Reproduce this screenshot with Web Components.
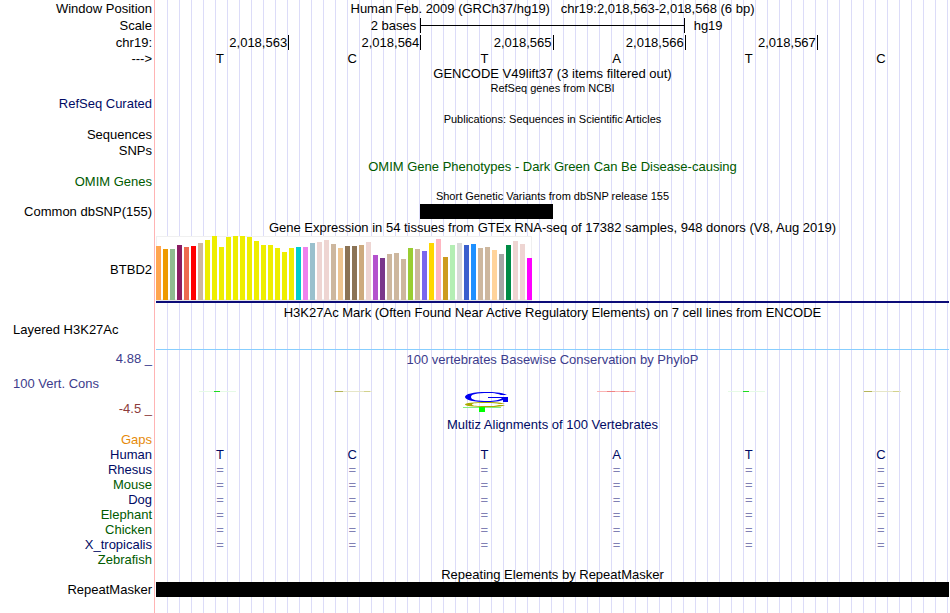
<!DOCTYPE html>
<html lang="en">
<head>
<meta charset="utf-8">
<title>Human chr19:2,018,563-2,018,568</title>
<style>
    body {
        margin: 0;
        background: #fff;
        color: #000;
        font: 13px/15px "Liberation Sans", Arial, sans-serif;
    }
</style>
</head>
<body>
<genome-browser>
    <track-row size="position" label="Window Position"><track-title>Human Feb. 2009 (GRCh37/hg19) &nbsp; chr19:2,018,563-2,018,568 (6 bp)</track-title></track-row>
    <track-row size="position" label="Scale"><scale-bar length="2 bases" assembly="hg19"></scale-bar></track-row>
    <track-row size="position" label="chr19:"><position-ruler start="2018563"></position-ruler></track-row>
    <track-row label="---&gt;"><base-row bases="TCTATC"></base-row></track-row>
    <track-row><track-title>GENCODE V49lift37 (3 items filtered out)</track-title></track-row>
    <track-row><track-title small>RefSeq genes from NCBI</track-title></track-row>
    <track-row label="RefSeq Curated" color="navy"></track-row>
    <track-row size="title"><track-title small>Publications: Sequences in Scientific Articles</track-title></track-row>
    <track-row label="Sequences"></track-row>
    <track-row size="title" label="SNPs"></track-row>
    <track-row size="title" color="green"><track-title>OMIM Gene Phenotypes - Dark Green Can Be Disease-causing</track-title></track-row>
    <track-row label="OMIM Genes" color="green"></track-row>
    <track-row><track-title small>Short Genetic Variants from dbSNP release 155</track-title></track-row>
    <track-row label="Common dbSNP(155)"><feature-bar from="2" to="3"></feature-bar></track-row>
    <track-row size="position"><track-title>Gene Expression in 54 tissues from GTEx RNA-seq of 17382 samples, 948 donors (V8, Aug 2019)</track-title></track-row>
    <track-row size="auto" label="BTBD2"><expression-chart></expression-chart></track-row>
    <track-row size="wide"><track-title>H3K27Ac Mark (Often Found Near Active Regulatory Elements) on 7 cell lines from ENCODE</track-title></track-row>
    <track-row size="signal" label="Layered H3K27Ac" side="left"></track-row>
    <track-row size="auto">
        <axis-labels slot="label" max="4.88 _" name="100 Vert. Cons" min="-4.5 _"></axis-labels>
        <conservation-plot></conservation-plot>
    </track-row>
    <track-row color="navy"><track-title>Multiz Alignments of 100 Vertebrates</track-title></track-row>
    <track-row label="Gaps" color="orange"></track-row>
    <track-row label="Human" color="navy"><base-row bases="TCTATC"></base-row></track-row>
    <track-row label="Rhesus" color="navy"><base-row bases="======"></base-row></track-row>
    <track-row label="Mouse" color="green"><base-row bases="======"></base-row></track-row>
    <track-row label="Dog" color="navy"><base-row bases="======"></base-row></track-row>
    <track-row label="Elephant" color="green"><base-row bases="======"></base-row></track-row>
    <track-row label="Chicken" color="green"><base-row bases="======"></base-row></track-row>
    <track-row label="X_tropicalis" color="navy"><base-row bases="======"></base-row></track-row>
    <track-row label="Zebrafish" color="green"></track-row>
    <track-row><track-title>Repeating Elements by RepeatMasker</track-title></track-row>
    <track-row label="RepeatMasker"><feature-bar from="0" to="6"></feature-bar></track-row>
</genome-browser>

<script>
class GenomeBrowser extends HTMLElement {
    constructor() {
        super();
        this.attachShadow({ mode: 'open' });
        this.shadowRoot.innerHTML = `
            <style>
                :host {
                    display: block;
                    box-sizing: border-box;
                    min-height: 100vh;
                    padding-right: 1px;
                    --label-width: 156px;
                    background:
                        linear-gradient(#ffb4b4, #ffb4b4) 154px 0 / 1px 100% no-repeat,
                        repeating-linear-gradient(to right, transparent 0 11px, #dcdcf8 11px 12px) 156px 0 no-repeat;
                }
            </style>
            <slot></slot>
        `;
    }
}

class TrackRow extends HTMLElement {
    constructor() {
        super();
        this.attachShadow({ mode: 'open' });
        this.shadowRoot.innerHTML = `
            <style>
                :host {
                    display: grid;
                    grid-template-columns: var(--label-width) minmax(0, 1fr);
                    min-height: 15px;
                }
                :host([size="title"]) { min-height: 16px; }
                :host([size="position"]) { min-height: 17px; }
                :host([size="wide"]) { min-height: 19px; }
                :host([size="signal"]) { min-height: 28px; }
                :host([color="navy"]) { color: #000a64; }
                :host([color="green"]) { color: #005a00; }
                :host([color="orange"]) { color: #e68a0a; }
                .label {
                    display: flex;
                    align-items: center;
                    justify-content: flex-end;
                    padding-right: 4px;
                    white-space: nowrap;
                }
                :host([side="left"]) .label {
                    justify-content: flex-start;
                    align-items: flex-start;
                    padding-left: 13px;
                }
                .data {
                    display: grid;
                    align-items: center;
                }
                :host([size="signal"]) .data { border-bottom: 1px solid #87ceff; }
            </style>
            <div class="label"><slot name="label"></slot></div>
            <div class="data"><slot></slot></div>
        `;
    }

    connectedCallback() {
        if (this.hasAttribute('label')) {
            this.shadowRoot.querySelector('slot[name="label"]').textContent = this.getAttribute('label');
        }
    }
}

class TrackTitle extends HTMLElement {
    constructor() {
        super();
        this.attachShadow({ mode: 'open' });
        this.shadowRoot.innerHTML = `
            <style>
                :host {
                    display: block;
                    text-align: center;
                    white-space: nowrap;
                }
                :host([small]) { font-size: 11px; }
            </style>
            <slot></slot>
        `;
    }
}

class ScaleBar extends HTMLElement {
    connectedCallback() {
        this.attachShadow({ mode: 'open' });
        this.shadowRoot.innerHTML = `
            <style>
                :host {
                    display: grid;
                    grid-template-columns: repeat(3, 1fr);
                }
                .length {
                    text-align: right;
                    padding-right: 4px;
                }
                .bar {
                    display: flex;
                    align-items: center;
                    border: solid #000;
                    border-width: 0 1px;
                }
                .bar::before {
                    content: "";
                    flex: 1;
                    height: 1px;
                    background: #000;
                }
                .assembly { padding-left: 9px; }
            </style>
            <span class="length">${this.getAttribute('length')}</span>
            <span class="bar"></span>
            <span class="assembly">${this.getAttribute('assembly')}</span>
        `;
    }
}

class PositionRuler extends HTMLElement {
    connectedCallback() {
        const start = Number(this.getAttribute('start'));
        let ticks = '';
        for (let i = 0; i < 5; i++) {
            ticks += `<span>${(start + i).toLocaleString('en-US')}</span>`;
        }
        this.attachShadow({ mode: 'open' });
        this.shadowRoot.innerHTML = `
            <style>
                :host {
                    display: grid;
                    grid-template-columns: repeat(6, 1fr);
                }
                span {
                    text-align: right;
                    padding-right: 1px;
                    border-right: 1px solid #000;
                    margin-right: -1px;
                }
            </style>
            ${ticks}
        `;
    }
}

class BaseRow extends HTMLElement {
    connectedCallback() {
        const bases = [...this.getAttribute('bases')];
        this.attachShadow({ mode: 'open' });
        this.shadowRoot.innerHTML = `
            <style>
                :host {
                    display: grid;
                    grid-template-columns: repeat(6, 1fr);
                    text-align: center;
                }
                span { padding-right: 4px; }
                .match { color: #8080b4; }
            </style>
            ${bases.map(base => `<span class="${base === '=' ? 'match' : ''}">${base}</span>`).join('')}
        `;
    }
}

class FeatureBar extends HTMLElement {
    connectedCallback() {
        const from = Number(this.getAttribute('from'));
        const to = Number(this.getAttribute('to'));
        this.attachShadow({ mode: 'open' });
        this.shadowRoot.innerHTML = `
            <style>
                :host {
                    display: grid;
                    grid-template-columns: repeat(6, 1fr);
                }
                div {
                    grid-column: ${from + 1} / ${to + 1};
                    height: 15px;
                    background: #000;
                }
            </style>
            <div></div>
        `;
    }
}

// [colour, height] for each tissue
const tissues = [
    ['#ffa54f', 54], ['#ee9a00', 51], ['#8fbc8f', 51], ['#8b1c62', 55], ['#ee6a50', 53], ['#ff0000', 54],
    ['#cdb79e', 57], ['#eeee00', 60], ['#eeee00', 64], ['#eeee00', 53], ['#eeee00', 63], ['#eeee00', 64],
    ['#eeee00', 64], ['#eeee00', 63], ['#eeee00', 59], ['#eeee00', 55], ['#eeee00', 55], ['#eeee00', 52],
    ['#eeee00', 48], ['#eeee00', 52], ['#00cdcd', 53], ['#ee82ee', 53], ['#9ac0cd', 57], ['#eed5d2', 58],
    ['#eed5d2', 60], ['#cdb79e', 56], ['#eec591', 52], ['#8b7355', 54], ['#8b7355', 54], ['#cdaa7d', 55],
    ['#eed5d2', 58], ['#b452cd', 45], ['#7a378b', 42], ['#cdb79e', 46], ['#cdb79e', 47], ['#cdb79e', 41],
    ['#9acd32', 52], ['#cdb79e', 51], ['#7a67ee', 49], ['#ffd700', 57], ['#ffb6c1', 61], ['#cd9b1d', 43],
    ['#b4eeb4', 55], ['#d9d9d9', 57], ['#3a5fcd', 55], ['#1e90ff', 56], ['#cdb79e', 52], ['#cdb79e', 53],
    ['#ffd39b', 50], ['#a6a6a6', 46], ['#008b45', 55], ['#eed5d2', 59], ['#eed5d2', 56], ['#ff00ff', 42]
];

class ExpressionChart extends HTMLElement {
    constructor() {
        super();
        this.attachShadow({ mode: 'open' });
        this.shadowRoot.innerHTML = `
            <style>
                :host {
                    display: block;
                    border-bottom: 2px solid #0c0c78;
                }
                .chart {
                    display: flex;
                    align-items: flex-end;
                    gap: 2px;
                    width: fit-content;
                    height: 64px;
                    background: #fff;
                    box-shadow: inset 0 0 0 1px #f0f0f0;
                    border-bottom: 1px solid #e6e6e6;
                }
                .chart div { width: 5px; }
            </style>
            <div class="chart">
                ${tissues.map(([color, height]) => `<div style="height:${height}px;background:${color}"></div>`).join('')}
            </div>
        `;
    }
}

class AxisLabels extends HTMLElement {
    connectedCallback() {
        this.attachShadow({ mode: 'open' });
        this.shadowRoot.innerHTML = `
            <style>
                :host {
                    display: flex;
                    flex-direction: column;
                    gap: 10px;
                    flex: 1;
                    text-align: right;
                    color: #3c3c8c;
                }
                .name {
                    text-align: left;
                    padding-left: 13px;
                }
                .min { color: #8c3c3c; }
            </style>
            <span>${this.getAttribute('max')}</span>
            <span class="name">${this.getAttribute('name')}</span>
            <span class="min">${this.getAttribute('min')}</span>
        `;
    }
}

class ConservationPlot extends HTMLElement {
    constructor() {
        super();
        this.attachShadow({ mode: 'open' });

        const green = `
            <rect x="1" y="2" width="37" height="1" fill="#e6fae6"/>
            <rect x="16" y="2" width="6" height="1" fill="#1edc1e"/>`;
        const olive = `
            <rect x="4" y="2" width="38" height="1" fill="#e6e6c8"/>
            <rect x="5" y="2" width="8" height="1" fill="#b4b45a"/>
            <rect x="34" y="2" width="6" height="1" fill="#d2d28c"/>`;
        const red = `
            <rect x="2" y="2" width="38" height="1" fill="#fab4b4"/>
            <rect x="12" y="2" width="8" height="1" fill="#f08282"/>
            <rect x="26" y="2" width="8" height="1" fill="#f08282"/>`;
        const stack = `
            <path d="M45 6 C39 3 31 3 25 3 C11 3 3 5 3 8 C3 11 12 13 25 13 C34 13 40 12 43 10 V12 H46 V8 H26 V9 H40 C38 11 33 12 26 12 C15 12 9 11 9 8 C9 5 15 4 26 4 C33 4 37 5 39 6 Z" fill="#0000f0"/>
            <rect x="41" y="8" width="5" height="5" fill="#0000f0"/>
            <path d="M43 15 C37 13 31 13 25 13 C11 13 3 14 3 15.500 C3 17 11 18 25 18 C32 18 39 18 43 16 L37 16 C34 17 30 17 25 17 C15 17 10 17 10 15.500 C10 14 15 14 25 14 C31 14 35 14 37 15 Z" fill="#aaaa00"/>
            <rect x="1" y="18" width="38" height="1" fill="#82f082"/>
            <rect x="17" y="18" width="6" height="5" fill="#00ff00"/>`;

        this.shadowRoot.innerHTML = `
            <style>
                :host {
                    display: block;
                    text-align: center;
                    color: #3c3c8c;
                }
                .title { padding: 2px 0 22px; }
                .logos {
                    display: grid;
                    grid-template-columns: repeat(6, 1fr);
                    justify-items: center;
                }
                svg {
                    display: block;
                    width: 44px;
                    height: 28px;
                    margin-right: 4px;
                    overflow: visible;
                }
            </style>
            <div class="title">100 vertebrates Basewise Conservation by PhyloP</div>
            <div class="logos">
                ${[green, olive, stack, red, green, olive].map(shape => `<svg viewBox="0 0 44 28" aria-hidden="true">${shape}</svg>`).join('')}
            </div>
        `;
    }
}

customElements.define('genome-browser', GenomeBrowser);
customElements.define('track-row', TrackRow);
customElements.define('track-title', TrackTitle);
customElements.define('scale-bar', ScaleBar);
customElements.define('position-ruler', PositionRuler);
customElements.define('base-row', BaseRow);
customElements.define('feature-bar', FeatureBar);
customElements.define('expression-chart', ExpressionChart);
customElements.define('axis-labels', AxisLabels);
customElements.define('conservation-plot', ConservationPlot);
</script>
</body>
</html>
